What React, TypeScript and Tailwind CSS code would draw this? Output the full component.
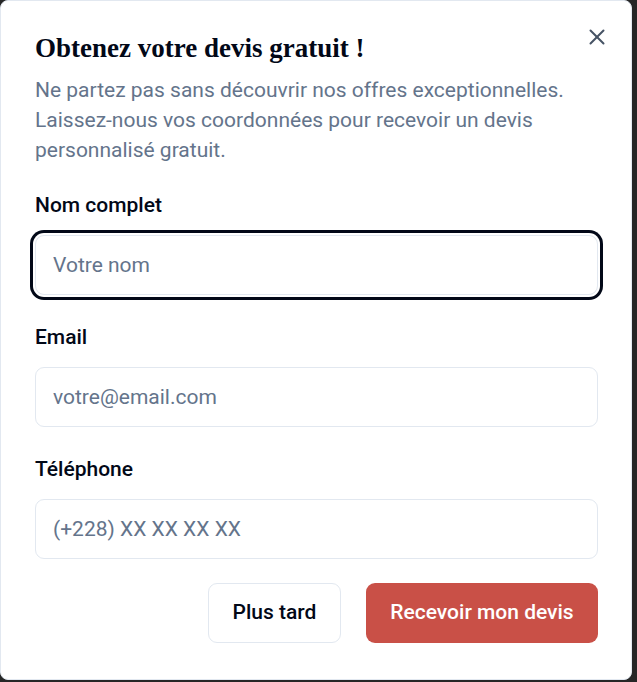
import React from 'react';

const sans = { fontFamily: 'Roboto, "Noto Sans", sans-serif' };

function Field({ label, placeholder, type = 'text', focused = false }: { label: string; placeholder: string; type?: string; focused?: boolean }) {
  return (
    <div className="flex flex-col">
      <label className="text-[21px] leading-[21px] font-medium text-[#020817]">{label}</label>
      <input
        type={type}
        placeholder={placeholder}
        readOnly
        className={`mt-[19px] h-[60px] w-full rounded-[9px] border border-[#e2e8f0] bg-white px-[17px] text-[21px] text-[#020817] placeholder:text-[#64748b] outline-none ${
          focused ? 'ring-[3px] ring-[#020817] ring-offset-2 ring-offset-white' : ''
        }`}
        style={sans}
      />
    </div>
  );
}

export default function App() {
  return (
    <div className="min-h-screen bg-[#262626]" style={sans}>
      <div className="relative w-[632px] h-[680px] rounded-lg border border-[#e2e8f0] bg-white pl-[34px] pr-[33px] pt-[29px]">
        <button className="absolute right-[24px] top-[26px] text-[#334155] opacity-90" aria-label="Fermer">
          <svg width="20" height="20" viewBox="0 0 20 20" fill="none" stroke="currentColor" strokeWidth="2" strokeLinecap="round">
            <line x1="3.5" y1="3.5" x2="16.5" y2="16.5" />
            <line x1="16.5" y1="3.5" x2="3.5" y2="16.5" />
          </svg>
        </button>

        <h2 className="text-[27px] leading-[36px] font-bold text-[#020817]" style={{ fontFamily: '"Liberation Serif", "DejaVu Serif", serif' }}>
          Obtenez votre devis gratuit !
        </h2>
        <p className="mt-[9px] text-[21px] leading-[30px] text-[#64748b]">
          Ne partez pas sans découvrir nos offres exceptionnelles. Laissez-nous vos coordonnées pour recevoir un devis personnalisé gratuit.
        </p>

        <form className="mt-[30px] flex flex-col gap-[32px]">
          <Field label="Nom complet" placeholder="Votre nom" focused />
          <Field label="Email" placeholder="votre@email.com" type="email" />
          <Field label="Téléphone" placeholder="(+228) XX XX XX XX" type="tel" />
        </form>

        <div className="mt-[24px] flex justify-end gap-[25px]">
          <button className="h-[60px] w-[133px] rounded-[9px] border border-[#e2e8f0] bg-white text-[21px] font-medium text-[#020817]">
            Plus tard
          </button>
          <button className="h-[60px] w-[232px] rounded-[9px] bg-[#c95047] text-[21px] font-medium text-white">
            Recevoir mon devis
          </button>
        </div>
      </div>
    </div>
  );
}
